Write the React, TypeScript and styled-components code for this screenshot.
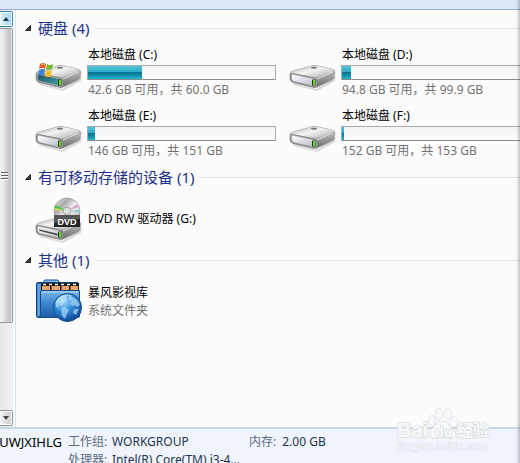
import React from 'react';
import styled, { createGlobalStyle } from 'styled-components';

const GlobalStyle = createGlobalStyle`
  * { box-sizing: border-box; }
  body {
    margin: 0;
    overflow: hidden;
    background: #fcfcfc;
    font-family: "Noto Sans", "Noto Sans CJK SC", sans-serif;
    font-size: 12px;
    color: #000;
  }
`;

const Window = styled.div`
  position: relative;
  display: flex;
  flex-direction: column;
  height: 100vh;
  overflow: hidden;
`;

const Toolbar = styled.header`
  flex: none;
  height: 10px;
  background: #dce7f5;
  border-bottom: 1px solid #a0afc9;
`;

const Body = styled.div`
  flex: 1;
  min-height: 0;
  display: flex;
`;

const ScrollBar = styled.div`
  flex: none;
  display: flex;
  flex-direction: column;
  width: 16px;
  padding: 1px 2px 1px 0;
  background: linear-gradient(90deg, #e6e6e6, #f3f3f3 13px, #fcfcfc 14px);
  border-right: 1px solid #d6e5f5;
`;

const ScrollButton = styled.button<{ $active?: boolean }>`
  flex: none;
  display: flex;
  align-items: center;
  justify-content: center;
  height: 16px;
  padding: 0;
  border: 1px solid ${p => (p.$active ? '#3c7fb1' : '#979797')};
  border-left: 0;
  border-radius: 0 2px 2px 0;
  box-shadow: inset 0 0 0 1px #f4fbff;
  background: ${p =>
    p.$active
      ? 'linear-gradient(90deg, #d9f0fb, #bfe5f8 50%, #a4d5ef)'
      : 'linear-gradient(90deg, #f4f4f4, #dedede 50%, #d0d0d0)'};
`;

const Thumb = styled.div`
  flex: 77;
  display: flex;
  align-items: center;
  margin-top: 1px;
  border: 1px solid #979797;
  border-left: 0;
  border-radius: 0 2px 2px 0;
  background: linear-gradient(90deg, #f2f2f2, #e9e9eb 30%, #d3d3d6 55%, #c2c2c6 90%, #eee 92%);
`;

const Track = styled.div`
  flex: 23;
`;

const Content = styled.main`
  flex: 1;
  min-width: 0;
  overflow: hidden;
  padding: 8px 0 0 8px;
`;

const Group = styled.section`
  margin-bottom: 3px;
`;

const GroupTitle = styled.h2`
  display: flex;
  align-items: center;
  gap: 6px;
  height: 20px;
  margin: 0;
  font-size: 15px;
  font-weight: 400;
  line-height: 20px;
  color: #1e3287;
  white-space: nowrap;
  &::after {
    content: '';
    flex: 1;
    height: 1px;
    background: #e2e2e2;
  }
`;

const Items = styled.div`
  display: grid;
  grid-template-columns: repeat(2, 254px);
  padding: 4px 0 0 10px;
`;

const Item = styled.div<{ $compact?: boolean }>`
  display: flex;
  align-items: center;
  gap: 5px;
  height: ${p => (p.$compact ? 56 : 61)}px;
`;

const Info = styled.div`
  flex: 1;
  min-width: 0;
  margin-right: 12px;
`;

const Line = styled.div<{ $muted?: boolean }>`
  padding-left: 1px;
  line-height: 18px;
  color: ${p => (p.$muted ? '#727272' : '#000')};
  white-space: nowrap;
`;

const Meter = styled.div`
  height: 15px;
  margin: 1px 0;
  border: 1px solid #aaa;
  border-bottom-color: #8c8c8c;
  border-radius: 1px;
  background: linear-gradient(#f3f3f3, #fdfdfd);
`;

const Fill = styled.div`
  height: 13px;
  background: linear-gradient(#4fc3dd 0, #2eacc9 45%, #04738f 50%, #078baa 70%, #25b8d4 100%);
`;

const Footer = styled.footer`
  flex: none;
  display: grid;
  grid-template-columns: 62px 38px 131px 1fr;
  column-gap: 6px;
  height: 36px;
  padding-top: 4px;
  overflow: hidden;
  border-top: 2px solid #c9d9ea;
  background: #f0f4fc;
  line-height: 18px;
  color: #24364f;
  white-space: nowrap;
`;

const Machine = styled.div`
  display: flex;
  justify-content: flex-end;
  font-size: 13px;
  color: #000;
`;

const Label = styled.span`
  color: #5c6b82;
`;

const Memory = styled.div`
  display: flex;
  gap: 6px;
`;

const Processor = styled.div`
  grid-column: 3 / -1;
`;

const ProcessorLabel = styled(Label)`
  grid-column: 2;
`;

const EdgeShadow = styled.div`
  position: absolute;
  inset: 0 0 0 auto;
  width: 4px;
  background: linear-gradient(90deg, transparent, rgba(70, 70, 70, 0.3));
`;

const Watermark = styled.svg`
  position: absolute;
  right: 26px;
  bottom: 8px;
  width: 98px;
  height: 50px;
`;

const DriveIcon = ({ system = false, disc = false }: { system?: boolean; disc?: boolean }) => (
  <svg width="48" height="48" viewBox="-1 0 48 48" aria-hidden="true">
    <defs>
      <linearGradient id="top" x1="0" y1="0" x2="1" y2="1">
        <stop offset="0" stopColor="#aaa" /><stop offset=".45" stopColor="#f4f4f4" /><stop offset="1" stopColor="#a9a9a9" />
      </linearGradient>
      <linearGradient id="side" x1="0" y1="0" x2="0" y2="1">
        <stop offset="0" stopColor="#dcdcdc" /><stop offset="1" stopColor="#686868" />
      </linearGradient>
      <linearGradient id="front" x1="0" y1="0" x2="1" y2="1">
        <stop offset="0" stopColor="#fff" /><stop offset="1" stopColor="#b8bbca" />
      </linearGradient>
      <linearGradient id="teal" x1="0" y1="0" x2="1" y2="1">
        <stop offset="0" stopColor="#1e5265" /><stop offset="1" stopColor="#49a6a8" />
      </linearGradient>
      <linearGradient id="disc" x1="0" y1="0" x2="1" y2="1">
        <stop offset="0" stopColor="#eee" /><stop offset=".3" stopColor="#aaa" /><stop offset=".55" stopColor="#fafafa" /><stop offset="1" stopColor="#999" />
      </linearGradient>
    </defs>
    <g transform={disc ? 'translate(0 8)' : 'translate(0 2)'}>
      <path d="M3 31 27 38 47 25 46 30 28 40 5 34Z" fill="#777" opacity=".25" />
      <path d="M1 23 Q1 21 4 20L22 15Q24 14 27 14.500L43 18Q46 19 46 21L45 27Q45 28 43 29L28 36Q26 37 23 36L3 31Q1 30 1 28Z" fill="url(#side)" stroke="#999" strokeWidth=".7" />
      <path d="M2 22 Q2 21 5 20L23 15Q25 14.500 27 15L43 18Q45 19 43 20L29 26Q27 27 24 26L4 22.500Z" fill="url(#top)" />
      <path d="M1.500 23Q2 22 4 22.500L25 27Q28 27.500 28 30V34Q28 36 25 36L4 31Q2 30 2 28Z" fill="#b2b2b2" stroke="#777" strokeWidth=".7" />
      <path d="M3 24.500Q3 23.500 5 24L24 28Q26 29 26 30V33Q26 35 24 34.500L5 30Q3 29 3 28Z" fill={system ? 'url(#teal)' : 'url(#front)'} />
      {disc && <path d="M4 26 23 30.500V33L4 28Z" fill="#444" stroke="#eee" strokeWidth=".6" />}
      <path d="m28 28 15-7" stroke="#f6f6f6" strokeWidth=".8" />
      <rect x="23" y="28.500" width="3.500" height="6" rx=".6" fill="#203018" />
      <rect x="24" y="29" width="2" height="5" fill="#5ee020" />
      {!disc && <ellipse cx="25" cy="16.800" rx="3" ry="1" fill="#777" />}
    </g>
    {system && (
      <g transform="translate(1 12)">
        <path d="M4 3Q7 1 10 3L9 8Q6 6 3 8Z" fill="#e85b24" />
        <path d="M11 3Q13 5 17 3L16 8Q12 10 10 8Z" fill="#79b82f" />
        <path d="M3 9Q6 7 9 9L8 15Q5 13 2 15Z" fill="#3b83d5" />
        <path d="M10 9Q12 11 16 9L15 15Q11 17 9 15Z" fill="#f6bc25" />
        <path d="M5 4Q7 2 9 4" stroke="#ffb088" fill="none" />
      </g>
    )}
    {disc && (
      <g transform="translate(-1 2)">
        <circle cx="33" cy="14" r="13" fill="url(#disc)" stroke="#9a9a9a" strokeWidth=".7" />
        <path d="M33 14 20.500 11 21.500 8Z" fill="#43c848" />
        <path d="m33 14-12.500-3 0 2Z" fill="#e5d64a" />
        <path d="m33 14 10-7 2 3Z" fill="#e5a3cd" />
        <path d="m33 14 12-1v2Z" fill="#7dcbd6" />
        <circle cx="33" cy="14" r="4" fill="#ddd" stroke="#999" strokeWidth=".8" />
        <circle cx="33" cy="14" r="1.500" fill="#fff" stroke="#aaa" strokeWidth=".5" />
        <rect x="20" y="18" width="26" height="12" fill="#242424" />
        <path d="M20 18H46V22L20 26Z" fill="#555" />
        <text x="33" y="27.500" textAnchor="middle" fontFamily="Liberation Sans, sans-serif" fontWeight="700" fontSize="9" fill="#fff">DVD</text>
      </g>
    )}
  </svg>
);

const FolderIcon = () => (
  <svg width="48" height="48" viewBox="0 0 48 48" aria-hidden="true">
    <defs>
      <linearGradient id="folder" x1="0" y1="0" x2="0" y2="1">
        <stop offset="0" stopColor="#7db9ee" /><stop offset=".5" stopColor="#3983ca" /><stop offset="1" stopColor="#1d5da6" />
      </linearGradient>
      <radialGradient id="globe" cx=".35" cy=".25" r=".8">
        <stop offset="0" stopColor="#b5e5ff" /><stop offset=".45" stopColor="#3690df" /><stop offset="1" stopColor="#08408f" />
      </radialGradient>
    </defs>
    <path d="M10 5V3Q10 2 11 2H23Q25 2 25 4V7H10Z" fill="#82bcef" stroke="#17569c" />
    <path d="M2.500 6Q2.500 4.500 4 4.500H44V39.500H4Q2.500 39.500 2.500 37Z" fill="#2872bb" stroke="#12417c" />
    <path d="M3.500 6H7V38H3.500Z" fill="#5ba2e2" />
    <rect x="7" y="5" width="38" height="9" fill="#1c1b18" />
    <path d="M8 8H16V13H8ZM17.500 8H26V13H17.500ZM27.500 8H35V13H27.500ZM36.500 8H44V13H36.500Z" fill="#e9a666" />
    <path d="M9 6.500H45" stroke="#fff" strokeWidth="1.500" strokeDasharray="3 3" />
    <path d="M6.500 14Q6.500 12.500 8 12.500H45.500V38Q45.500 39.500 44 39.500H5Q6.500 38 6.500 36Z" fill="url(#folder)" stroke="#174b88" />
    <path d="M8 14H44" stroke="#b4dcff" />
    <circle cx="33.500" cy="29.500" r="14" fill="url(#globe)" stroke="#174e8b" />
    <path d="M22 23Q25 19 30 17L33 19 31 21 33 23 29 25 28 28 24 27 25 30 22 29ZM35 18Q43 19 46 27L43 29 41 27 38 28 36 25 38 23 35 22ZM27 30 31 29 35 32 33 36 31 41 28 38ZM40 31 45 31 42 37 39 35Z" fill="#b5e0fa" opacity=".65" />
    <path d="M22 25Q27 15 38 18" fill="none" stroke="#e8f8ff" opacity=".6" />
  </svg>
);

const Marker = () => (
  <svg width="8" height="8" viewBox="0 0 8 8" aria-hidden="true">
    <path d="M6.500 1.500V6.500H1.500Z" fill="#444" stroke="#202020" strokeLinejoin="round" />
  </svg>
);

const Arrow = ({ down = false }: { down?: boolean }) => (
  <svg width="8" height="6" viewBox="0 0 8 6" aria-hidden="true">
    <path d={down ? 'M1 1H7L4 5Z' : 'M1 5H7L4 1Z'} fill={down ? '#444' : '#153c54'} />
  </svg>
);

const drives = [
  { name: '本地磁盘 (C:)', detail: '42.6 GB 可用，共 60.0 GB', used: 29, system: true },
  { name: '本地磁盘 (D:)', detail: '94.8 GB 可用，共 99.9 GB', used: 5 },
  { name: '本地磁盘 (E:)', detail: '146 GB 可用，共 151 GB', used: 4 },
  { name: '本地磁盘 (F:)', detail: '152 GB 可用，共 153 GB', used: 1 },
];

export default function App() {
  return (
    <Window lang="zh-CN">
      <GlobalStyle />
      <Toolbar />
      <Body>
        <ScrollBar>
          <ScrollButton $active aria-label="向上滚动"><Arrow /></ScrollButton>
          <Thumb>
            <svg width="9" height="9" viewBox="0 0 9 9" aria-hidden="true">
              <path d="M1 1.500H8M1 4.500H8M1 7.500H8" stroke="#606060" />
              <path d="M1 2.500H8M1 5.500H8M1 8.500H8" stroke="#fff" />
            </svg>
          </Thumb>
          <Track />
          <ScrollButton aria-label="向下滚动"><Arrow down /></ScrollButton>
        </ScrollBar>
        <Content>
          <Group>
            <GroupTitle><Marker />硬盘 (4)</GroupTitle>
            <Items>
              {drives.map(d => (
                <Item key={d.name}>
                  <DriveIcon system={d.system} />
                  <Info>
                    <Line>{d.name}</Line>
                    <Meter role="meter" aria-label={d.name} aria-valuenow={d.used} aria-valuemin={0} aria-valuemax={100}>
                      <Fill style={{ width: `${d.used}%` }} />
                    </Meter>
                    <Line $muted>{d.detail}</Line>
                  </Info>
                </Item>
              ))}
            </Items>
          </Group>
          <Group>
            <GroupTitle><Marker />有可移动存储的设备 (1)</GroupTitle>
            <Items>
              <Item $compact>
                <DriveIcon disc />
                <Info><Line>DVD RW 驱动器 (G:)</Line></Info>
              </Item>
            </Items>
          </Group>
          <Group>
            <GroupTitle><Marker />其他 (1)</GroupTitle>
            <Items>
              <Item $compact>
                <FolderIcon />
                <Info>
                  <Line>暴风影视库</Line>
                  <Line $muted>系统文件夹</Line>
                </Info>
              </Item>
            </Items>
          </Group>
        </Content>
      </Body>
      <Footer>
        <Machine>UWJXIHLG</Machine>
        <Label>工作组:</Label>
        <span>WORKGROUP</span>
        <Memory><Label>内存:</Label><span>2.00 GB</span></Memory>
        <ProcessorLabel>处理器:</ProcessorLabel>
        <Processor>Intel(R) Core(TM) i3-4...</Processor>
      </Footer>
      <Watermark viewBox="0 0 98 50" aria-hidden="true">
        <g fill="#f8f9fb" stroke="#dcdfe4" strokeWidth="1.500" paintOrder="stroke">
          <ellipse cx="36" cy="16" rx="3.500" ry="5" />
          <ellipse cx="43" cy="9" rx="3.500" ry="5" />
          <ellipse cx="52" cy="9" rx="3.500" ry="5" />
          <ellipse cx="58" cy="17" rx="3.500" ry="5" />
          <path d="M34 29Q34 25 39 22Q42 16 47 16Q51 16 54 22Q60 26 59 30Q58 34 52 33Q46 31 41 33Q35 34 34 29Z" />
          <text x="1" y="32" fontFamily="Liberation Sans, sans-serif" fontWeight="700" fontSize="20">Bai</text>
          <text x="39" y="32" fontFamily="Liberation Sans, sans-serif" fontWeight="700" fontSize="14">du</text>
          <text x="61" y="31" fontFamily="Noto Sans CJK SC, sans-serif" fontWeight="700" fontSize="16">经验</text>
          <text x="2" y="45" fontFamily="Liberation Sans, sans-serif" fontSize="11" strokeWidth="1">jingyan.baidu.com</text>
        </g>
      </Watermark>
      <EdgeShadow />
    </Window>
  );
}
